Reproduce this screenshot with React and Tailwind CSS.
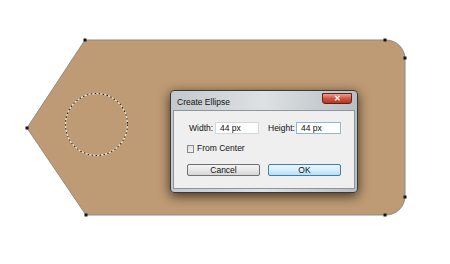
import React from "react";

function Tag() {
  const nodes = [
    [85, 40],
    [385, 40],
    [405, 58],
    [405, 197],
    [385, 215],
    [86, 215],
    [27, 128],
  ];
  return (
    <svg width="450" height="264" className="absolute left-0 top-0">
      <path
        d="M85 40 L386 40 A19 19 0 0 1 405 59 L405 196 A19 19 0 0 1 386 215 L86 215 L27 128 Z"
        fill="#bf9b75"
        stroke="#8c8a88"
        strokeWidth="1"
      />
      <circle cx="96.5" cy="124.5" r="31" fill="none" stroke="#f4ead8" strokeWidth="1.1" />
      <circle
        cx="96.5"
        cy="124.5"
        r="31"
        fill="none"
        stroke="#2a2420"
        strokeWidth="1.1"
        strokeDasharray="1.6 2.4"
      />
      {nodes.map(([x, y], i) => (
        <rect key={i} x={x - 1.5} y={y - 1.5} width="3" height="3" fill="#10141c" />
      ))}
    </svg>
  );
}

function Dialog() {
  return (
    <div
      className="absolute left-[170px] top-[90px] w-[188px] h-[103px] rounded-[4px] border border-[#3a3a3a] bg-gradient-to-r from-[#c4c9cd] via-[#dde1e4] to-[#b8bec3] shadow-[0_3px_12px_rgba(40,28,16,0.85)] flex flex-col"
      style={{ fontFamily: '"Liberation Sans", Arial, sans-serif' }}
    >
      <div className="h-[19px] flex items-start justify-between pl-[6px] pr-[5px]">
        <span className="text-[8.5px] text-[#111] mt-[5px]">Create Ellipse</span>
        <div className="w-[30px] h-[11px] mt-[2px] rounded-b-[3px] border border-[#5a2418] bg-gradient-to-b from-[#e8a090] via-[#d2543e] to-[#b8341f] flex items-center justify-center text-white text-[8px] font-bold leading-none">
          ✕
        </div>
      </div>
      <div className="mx-[2px] mb-[3px] flex-1 bg-[#efefef] border border-[#8d969c] flex flex-col pl-[13px] pt-[11px]">
        <div className="flex items-center h-[12px] text-[8.5px] text-[#111]">
          <span className="w-[28px] pl-[2px]">Width:</span>
          <div className="w-[44px] h-[12px] bg-white border border-[#d4d8dc] pl-[4px] flex items-center">44 px</div>
          <span className="ml-[8px] w-[29px] pl-[1px]">Height:</span>
          <div className="w-[45px] h-[12px] bg-white border border-[#8fb8d8] pl-[4px] flex items-center">44 px</div>
        </div>
        <div className="flex items-center mt-[10px] h-[9px] text-[8.5px] text-[#111]">
          <div className="w-[7px] h-[8px] border border-[#8a8a8a] bg-gradient-to-br from-[#dcdcdc] to-[#f6f6f6]" />
          <span className="ml-[3px]">From Center</span>
        </div>
        <div className="flex mt-[11px] gap-[8px] text-[8.5px] text-[#111]">
          <div className="w-[73px] h-[12px] rounded-[2px] border border-[#707070] bg-gradient-to-b from-[#f4f4f4] via-[#e8e8e8] to-[#d6d6d6] flex items-center justify-center">
            Cancel
          </div>
          <div className="w-[73px] h-[12px] rounded-[2px] border border-[#3c7fb1] bg-gradient-to-b from-[#eaf6fd] via-[#d6eefb] to-[#b4def5] flex items-center justify-center">
            OK
          </div>
        </div>
      </div>
    </div>
  );
}

export default function App() {
  return (
    <div className="relative w-[450px] h-[264px] bg-white overflow-hidden">
      <Tag />
      <Dialog />
    </div>
  );
}
